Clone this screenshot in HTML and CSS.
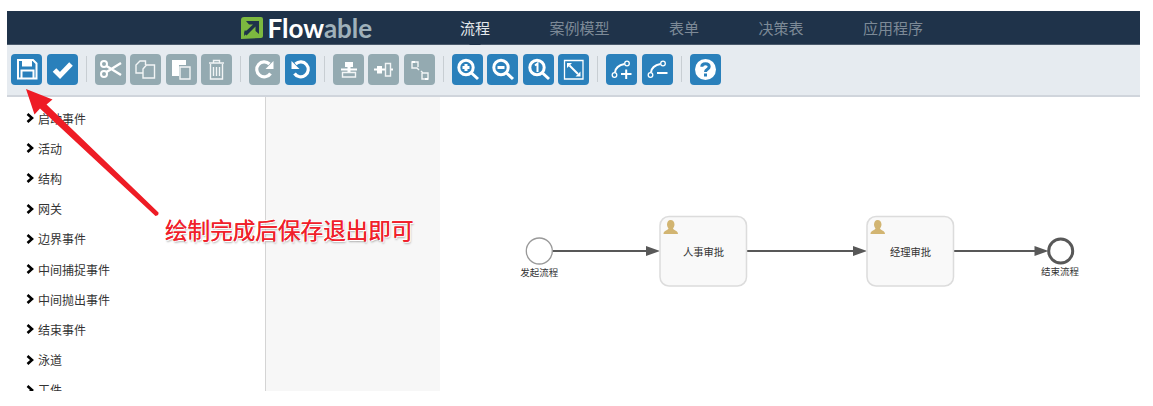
FILE: index.html
```html
<!DOCTYPE html>
<html lang="zh">
<head>
<meta charset="utf-8">
<title>Flowable</title>
<link rel="stylesheet" href="styles.css">
</head>
<body>
<div class="app">
  <header class="topbar">
    <div class="logo">
      <svg class="logo-mark" viewBox="0 0 22 22"><path class="logo-green" d="M3 0H20Q22 0 22 2V19Q22 21 20 21L0 22V3Q0 0 3 0Z"/><path class="logo-dark" d="M5 4H18V17L14.500 14V9.500L5.500 18.500L3 16L12 7.500H8Z"/><path class="logo-dark" d="M3 19L8 14L3.500 13.500Z"/></svg>
      <span class="logo-text">Flow<span class="logo-able">able</span></span>
    </div>
    <nav class="nav">
      <a class="nav-item active">流程</a>
      <a class="nav-item">案例模型</a>
      <a class="nav-item">表单</a>
      <a class="nav-item">决策表</a>
      <a class="nav-item">应用程序</a>
    </nav>
  </header>
  <div class="toolbar">
    <div class="group">
      <button class="btn"><svg viewBox="0 0 31 31"><path class="ln" d="M7 6H22L25.500 9.500V24.500H7Z"/><path class="fl" d="M11 6H21V12.500H11Z"/><path class="ln" d="M10.500 24.500V16.500H22.500V24.500"/></svg></button>
      <button class="btn"><svg viewBox="0 0 31 31"><path class="ln thick" d="M7.500 16L13 21.500L24 10"/></svg></button>
    </div>
    <span class="sep"></span>
    <div class="group">
      <button class="btn off"><svg viewBox="0 0 31 31"><circle class="ln" cx="9" cy="10" r="3"/><circle class="ln" cx="9" cy="20" r="3"/><path class="ln thick25" d="M11.500 12L26 21M11.500 18L26 9"/></svg></button>
      <button class="btn off"><svg viewBox="0 0 31 31"><path class="ln soft" d="M13 19H6V11L10 7H15.500V11"/><path class="ln soft bgfill" d="M13 15L16.500 11H24.500V24H13Z"/></svg></button>
      <button class="btn off"><svg viewBox="0 0 31 31"><path class="fl" d="M6 6H20V11H13V22H6Z"/><path class="ln soft" d="M14 13H24V25H14Z"/></svg></button>
      <button class="btn off"><svg viewBox="0 0 31 31"><path class="ln soft" d="M9.500 10V25H21.500V10M8 9H23M12.500 9V6.500H18.500V9M12.500 13V22M15.500 13V22M18.500 13V22"/></svg></button>
    </div>
    <span class="sep"></span>
    <div class="group">
      <button class="btn off"><svg viewBox="0 0 31 31"><path class="ln arc" d="M21.500 19.500A7.500 7.500 0 1 1 20.500 10"/><path class="fl" d="M24.500 7V15H16.500Z"/></svg></button>
      <button class="btn"><svg viewBox="0 0 31 31"><path class="ln arc" d="M9.500 19.500A7.500 7.500 0 1 0 10.500 10"/><path class="fl" d="M6.500 7V15H14.500Z"/></svg></button>
    </div>
    <span class="sep"></span>
    <div class="group">
      <button class="btn off"><svg viewBox="0 0 31 31"><path class="fl" d="M12 8H20V13H12ZM8 14.500H24V16.500H8ZM14.500 13H17.500V18H14.500Z"/><path class="ln soft" d="M9.500 18.500H22.500V23H9.500Z"/></svg></button>
      <button class="btn off"><svg viewBox="0 0 31 31"><path class="fl" d="M6 14.500H9V16.500H6ZM9 12H14V19.500H9ZM14 14.500H17V16.500H14ZM22.500 14.500H25V16.500H22.500Z"/><path class="ln soft" d="M17.500 9.500H22.500V22H17.500Z"/></svg></button>
      <button class="btn off"><svg viewBox="0 0 31 31"><path class="ln soft" d="M14 13V8H8V14H13L15 16M17 17L19 19H24V25H18V19"/><path class="fl" d="M8 7H11V9H8ZM21 24H24V26H21Z"/></svg></button>
    </div>
    <span class="sep"></span>
    <div class="group">
      <button class="btn"><svg viewBox="0 0 31 31"><circle class="ln thick3" cx="14" cy="13.500" r="7.200"/><path class="ln thick3" d="M19.500 19L26 25M10.500 13.500H17.500M14 10V17"/></svg></button>
      <button class="btn"><svg viewBox="0 0 31 31"><circle class="ln thick3" cx="14" cy="13.500" r="7.200"/><path class="ln thick3" d="M19.500 19L26 25M10.500 13.500H17.500"/></svg></button>
      <button class="btn"><svg viewBox="0 0 31 31"><circle class="ln thick3" cx="14" cy="13.500" r="7.200"/><path class="ln thick3" d="M19.500 19L26 25"/><path class="ln" d="M12 11.500L14.500 9.500V18"/></svg></button>
      <button class="btn"><svg viewBox="0 0 31 31"><path class="ln thin" d="M6.500 6.500H25V25H6.500Z"/><path class="ln" d="M11.500 11.500L20 20"/><path class="fl" d="M9 9H14L9 14ZM22.500 22.500H17.500L22.500 17.500Z"/></svg></button>
    </div>
    <span class="sep"></span>
    <div class="group">
      <button class="btn"><svg viewBox="0 0 31 31"><circle class="ln thin" cx="8.500" cy="21" r="2.300"/><circle class="ln thin" cx="21" cy="9.500" r="2.300"/><path class="ln" d="M9 18.500C9.500 13 13 11 18.500 10M15 20H25.500M20.200 15.500V25"/></svg></button>
      <button class="btn"><svg viewBox="0 0 31 31"><circle class="ln thin" cx="8.500" cy="21" r="2.300"/><circle class="ln thin" cx="21" cy="9.500" r="2.300"/><path class="ln" d="M9 18.500C9.500 13 13 11 18.500 10M15 19H25.500"/></svg></button>
    </div>
    <span class="sep"></span>
    <div class="group">
      <button class="btn"><svg viewBox="0 0 31 31"><circle class="fl" cx="15.500" cy="15.500" r="10.500"/><path class="q" d="M11.800 12.800C11.800 8.800 19.200 8.800 19.200 12.800C19.200 15.500 15.500 15 15.500 18"/><rect class="qd" x="14" y="19.500" width="3" height="3"/></svg></button>
    </div>
  </div>
  <main class="main">
    <aside class="palette">
      <ul class="tree">
        <li class="tree-item"><svg class="chev" viewBox="0 0 8 10"><path d="M1.500 1L6 5L1.500 9"/></svg>启动事件</li>
        <li class="tree-item"><svg class="chev" viewBox="0 0 8 10"><path d="M1.500 1L6 5L1.500 9"/></svg>活动</li>
        <li class="tree-item"><svg class="chev" viewBox="0 0 8 10"><path d="M1.500 1L6 5L1.500 9"/></svg>结构</li>
        <li class="tree-item"><svg class="chev" viewBox="0 0 8 10"><path d="M1.500 1L6 5L1.500 9"/></svg>网关</li>
        <li class="tree-item"><svg class="chev" viewBox="0 0 8 10"><path d="M1.500 1L6 5L1.500 9"/></svg>边界事件</li>
        <li class="tree-item"><svg class="chev" viewBox="0 0 8 10"><path d="M1.500 1L6 5L1.500 9"/></svg>中间捕捉事件</li>
        <li class="tree-item"><svg class="chev" viewBox="0 0 8 10"><path d="M1.500 1L6 5L1.500 9"/></svg>中间抛出事件</li>
        <li class="tree-item"><svg class="chev" viewBox="0 0 8 10"><path d="M1.500 1L6 5L1.500 9"/></svg>结束事件</li>
        <li class="tree-item"><svg class="chev" viewBox="0 0 8 10"><path d="M1.500 1L6 5L1.500 9"/></svg>泳道</li>
        <li class="tree-item"><svg class="chev" viewBox="0 0 8 10"><path d="M1.500 1L6 5L1.500 9"/></svg>工件</li>
      </ul>
    </aside>
    <div class="props"></div>
    <div class="canvas">
      <svg class="diagram" viewBox="440 97 700 294">
        <path class="flow" d="M552.500 251H648M746.500 251H855M953.500 251H1037"/>
        <path class="head" d="M646 246L660 251L646 256ZM853 246L867 251L853 256ZM1034.500 246L1048.500 251L1034.500 256Z"/>
        <circle class="start" cx="539.300" cy="251" r="13"/>
        <circle class="end" cx="1060.700" cy="251" r="12"/>
        <rect class="task" x="660" y="216.500" width="86.500" height="69.500" rx="9"/>
        <rect class="task" x="867" y="216.500" width="86.500" height="69.500" rx="9"/>
        <path class="user" d="M670.500 220C673 220 674.500 222 674.500 224.500C674.500 226.500 673.500 227.500 673 228.500C674 230.500 678 230.500 678 234H663.500C663.500 230.500 667.500 230.500 668.500 228.500C668 227.500 667 226.500 667 224.500C667 222 668.500 220 670.500 220Z"/>
        <path class="user" d="M877.500 220C880 220 881.500 222 881.500 224.500C881.500 226.500 880.500 227.500 880 228.500C881 230.500 885 230.500 885 234H870.500C870.500 230.500 874.500 230.500 875.500 228.500C875 227.500 874 226.500 874 224.500C874 222 875.500 220 877.500 220Z"/>
        <text class="task-label" x="703.500" y="256">人事审批</text>
        <text class="task-label" x="910.500" y="256">经理审批</text>
        <text class="event-label" x="539.300" y="275.500">发起流程</text>
        <text class="event-label" x="1060" y="274.500">结束流程</text>
      </svg>
    </div>
  </main>
</div>
<svg class="pointer" viewBox="0 0 1153 406"><path class="pointer-arrow" d="M26 89L52.500 99.500L46.500 104.500L158.500 212.500Q159 215.500 155.500 216L40 108.500L34.500 114.500Z"/></svg>
<div class="note">绘制完成后保存退出即可</div>
</body>
</html>
```
FILE: styles.css
```css
* { box-sizing: border-box; }
html, body { margin: 0; height: 100%; background: #fff; overflow: hidden; }
body { font-family: "Noto Sans CJK SC", "Liberation Sans", sans-serif; }
.app { margin: 11px 13px 0 7px; width: 1133px; height: 380px; display: flex; flex-direction: column; overflow: hidden; position: relative; }
.topbar { flex: 0 0 34px; background: #1f334a; border-bottom: 1px solid #4a5a6c; display: flex; align-items: center; padding-left: 233.500px; }
.logo { display: flex; align-items: center; gap: 5px; width: 219.500px; }
.logo-mark { width: 22px; height: 22px; }
.logo-green { fill: #7cb83f; }
.logo-dark { fill: #1f334a; }
.logo-text { font-family: Lato, sans-serif; font-weight: 700; font-size: 26px; line-height: 30px; color: #fff; }
.logo-able { color: #9fb1ba; }
.nav { display: flex; gap: 59.500px; }
.nav-item { font-size: 15px; line-height: 22px; color: #7d8a97; position: relative; }
.nav-item.active { color: #e4e8ec; }
.nav-item.active::after { content: ""; position: absolute; left: 50%; bottom: -11px; margin-left: -6px; border: 6px solid transparent; border-bottom: 0; border-top-color: #1f334a; }
.toolbar { flex: 0 0 52px; background: #e6ebf0; border-bottom: 2px solid #d0d5dc; display: flex; align-items: center; padding: 0 0 2px 4.300px; position: relative; }
.group { display: flex; gap: 4.500px; }
.btn { width: 31px; height: 31px; padding: 0; border: 0; border-radius: 4px; background: #2a80bb; display: block; }
.btn.off { background: #94aab1; }
.btn svg { width: 31px; height: 31px; display: block; }
.sep { width: 1px; height: 26px; margin: 0 8px; background: #c8ced3; }
.ln { fill: none; stroke: #fff; stroke-width: 2; }
.fl { fill: #fff; }
.thick { stroke-width: 5; }
.thick3 { stroke-width: 3; }
.thick25 { stroke-width: 2.500; }
.thin { stroke-width: 1.300; }
.arc { stroke-width: 3.200; }
.soft { stroke-width: 1.400; stroke: #f2f5f6; }
.bgfill { fill: #94aab1; }
.q { fill: none; stroke: #2a80bb; stroke-width: 3; }
.qd { fill: #2a80bb; }
.main { flex: 1; display: flex; min-height: 0; background: #fff; }
.palette { width: 259px; border-right: 1px solid #d4d4d4; overflow: hidden; }
.tree { list-style: none; margin: 0; padding: 6px 0 0 19px; }
.tree-item { height: 30.200px; display: flex; align-items: center; gap: 4px; font-size: 12px; color: #333; white-space: nowrap; }
.chev { width: 8px; height: 10px; flex: none; }
.chev path { fill: none; stroke: #000; stroke-width: 2.600; }
.props { width: 174px; background: #f7f7f7; }
.canvas { flex: 1; min-width: 0; }
.diagram { width: 700px; height: 294px; display: block; }
.flow { fill: none; stroke: #585858; stroke-width: 1.800; }
.head { fill: #585858; }
.start { fill: #fff; stroke: #999; stroke-width: 1.300; }
.end { fill: #fff; stroke: #585858; stroke-width: 3; }
.task { fill: #f9f9f9; stroke: #dcdcdc; stroke-width: 1.500; }
.user { fill: #d2b572; }
.task-label { font-size: 10.300px; fill: #333; text-anchor: middle; }
.event-label { font-size: 9.500px; fill: #333; text-anchor: middle; }
.pointer { position: absolute; left: 0; top: 0; width: 1153px; height: 406px; pointer-events: none; }
.pointer-arrow { fill: #ee1c25; }
.note { position: absolute; left: 165px; top: 214px; font-size: 22.600px; line-height: 32px; color: #f0202a; white-space: nowrap; text-shadow: 0 0 0.6px #f0202a, 1px 1px 0 #fff, -1px -1px 0 #fff, 1px 2px 2px #aaa; }
```
